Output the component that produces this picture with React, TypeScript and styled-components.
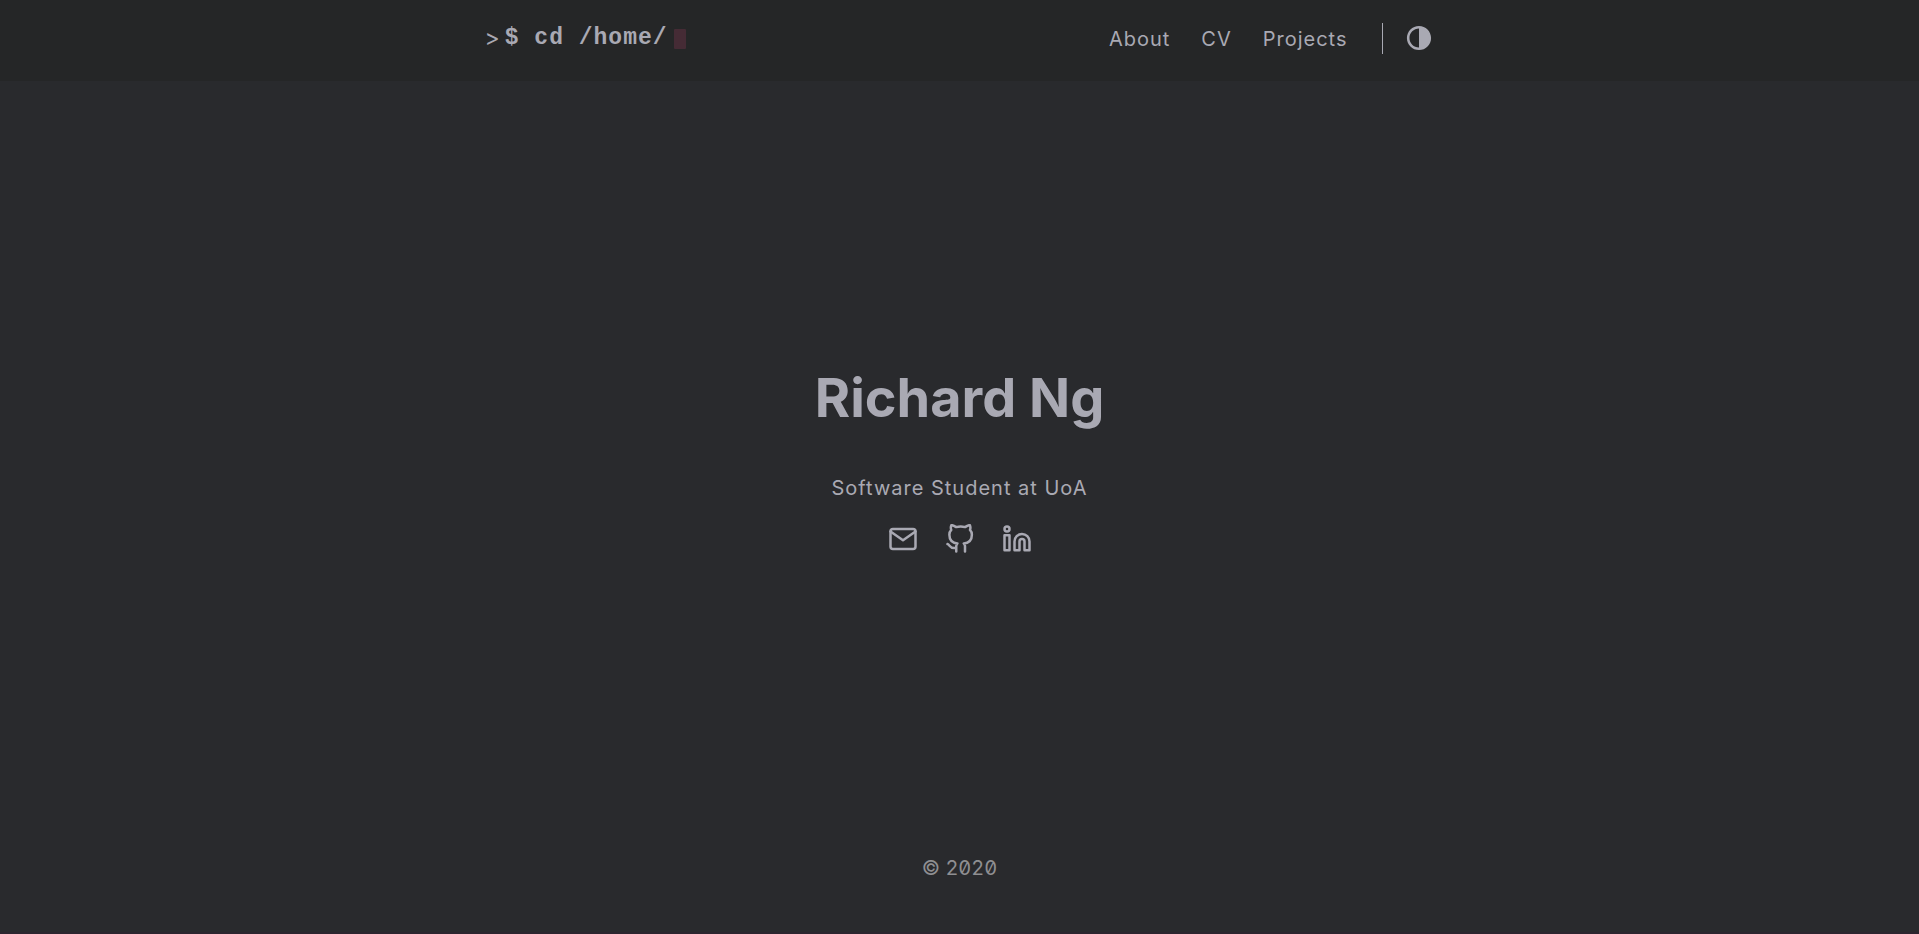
import React from 'react';
import styled, { createGlobalStyle } from 'styled-components';

const GlobalStyle = createGlobalStyle`
  *, *::before, *::after { box-sizing: border-box; }
  body {
    margin: 0;
    background: #292a2d;
    color: #a9a9b3;
    font-family: Inter, "Liberation Sans", sans-serif;
    font-size: 20px;
    line-height: 31px;
    letter-spacing: 1px;
  }
  a { color: inherit; text-decoration: none; }
`;

const Page = styled.div`
  display: flex;
  flex-direction: column;
  min-height: 100vh;
  border-bottom: 2px solid #2c252f;
`;

const Header = styled.header`
  display: flex;
  justify-content: center;
  padding: 20px;
  background: #252627;
`;

const HeaderInner = styled.div`
  display: flex;
  align-items: center;
  justify-content: space-between;
  width: 100%;
  max-width: 950px;
  height: 41px;
  padding-bottom: 4px;
`;

const Logo = styled.a`
  display: flex;
  align-items: center;
`;

const Prompt = styled.span`
  font-size: 23px;
`;

const LogoPath = styled.span`
  margin: 0 6px 0 4px;
  font: bold 23px/31px "Courier New", "Liberation Mono", monospace;
  white-space: pre;
`;

const Cursor = styled.span`
  width: 12px;
  height: 20px;
  border-radius: 1px;
  background: #452b35;
`;

const Nav = styled.nav`
  display: flex;
  align-items: center;
`;

const Menu = styled.ul`
  display: flex;
  gap: 31px;
  margin: 0;
  padding: 2px 34px 0 0;
  list-style: none;
`;

const ThemeToggle = styled.button`
  display: flex;
  align-items: center;
  height: 31px;
  padding: 0 2px 2px 22px;
  border: 0;
  border-left: 1px solid #a9a9b3;
  background: none;
  color: inherit;
  cursor: pointer;
`;

const Main = styled.main`
  display: flex;
  flex: 1;
  flex-direction: column;
  align-items: center;
  justify-content: center;
  text-align: center;
`;

const Name = styled.h1`
  margin: 0 0 40px;
  font-size: 54px;
  font-weight: 700;
  line-height: 70px;
  letter-spacing: 0;
`;

const Tagline = styled.p`
  margin: 0;
`;

const Social = styled.div`
  display: flex;
  gap: 27px;
  margin-top: 20px;
`;

const SocialLink = styled.a`
  display: flex;
`;

const Footer = styled.footer`
  padding: 18px 40px 48px;
  color: #8f8f92;
  text-align: center;
  letter-spacing: 0;
  font-feature-settings: "zero", "tnum";
`;

const Icon = ({ children }: { children: React.ReactNode }) => (
  <svg width="30" height="30" viewBox="0 0 24 24" fill="none" stroke="currentColor"
    strokeWidth="2" strokeLinecap="round" strokeLinejoin="round" aria-hidden="true">
    {children}
  </svg>
);

const links = ['About', 'CV', 'Projects'];

const social = [
  {
    label: 'Email',
    icon: (
      <>
        <path d="M4 4h16c1.1 0 2 .9 2 2v12c0 1.1-.9 2-2 2H4c-1.1 0-2-.9-2-2V6c0-1.1.9-2 2-2z" />
        <polyline points="22,6 12,13 2,6" />
      </>
    ),
  },
  {
    label: 'GitHub',
    icon: (
      <path d="M9 19c-5 1.5-5-2.5-7-3m14 6v-3.87a3.37 3.37 0 0 0-.94-2.61c3.14-.35 6.44-1.54 6.44-7A5.44 5.44 0 0 0 20 4.77 5.07 5.07 0 0 0 19.91 1S18.73.65 16 2.48a13.38 13.38 0 0 0-7 0C6.27.65 5.09 1 5.09 1A5.07 5.07 0 0 0 5 4.77a5.44 5.44 0 0 0-1.5 3.78c0 5.42 3.3 6.61 6.44 7A3.37 3.37 0 0 0 9 18.13V22" />
    ),
  },
  {
    label: 'LinkedIn',
    icon: (
      <>
        <path d="M16 8a6 6 0 0 1 6 6v7h-4v-7a2 2 0 0 0-2-2 2 2 0 0 0-2 2v7h-4v-7a6 6 0 0 1 6-6z" />
        <rect x="2" y="9" width="4" height="12" />
        <circle cx="4" cy="4" r="2" />
      </>
    ),
  },
];

export default function App() {
  return (
    <>
      <GlobalStyle />
      <Page>
        <Header>
          <HeaderInner>
            <Logo href="#">
              <Prompt>&gt;</Prompt>
              <LogoPath>$ cd /home/</LogoPath>
              <Cursor />
            </Logo>
            <Nav>
              <Menu>
                {links.map((link) => (
                  <li key={link}><a href={`#${link.toLowerCase()}`}>{link}</a></li>
                ))}
              </Menu>
              <ThemeToggle type="button" aria-label="Toggle theme">
                <svg width="28" height="28" viewBox="0 0 44 44" fill="currentColor" aria-hidden="true">
                  <path fillRule="evenodd" d="M22 41C32.493 41 41 32.493 41 22S32.493 3 22 3 3 11.507 3 22s8.507 19 19 19ZM7 22C7 13.716 13.716 7 22 7v30C13.716 37 7 30.284 7 22Z" />
                </svg>
              </ThemeToggle>
            </Nav>
          </HeaderInner>
        </Header>
        <Main>
          <Name>Richard Ng</Name>
          <Tagline>Software Student at UoA</Tagline>
          <Social>
            {social.map(({ label, icon }) => (
              <SocialLink key={label} href={`#${label.toLowerCase()}`} aria-label={label}>
                <Icon>{icon}</Icon>
              </SocialLink>
            ))}
          </Social>
        </Main>
        <Footer>© 2020</Footer>
      </Page>
    </>
  );
}
